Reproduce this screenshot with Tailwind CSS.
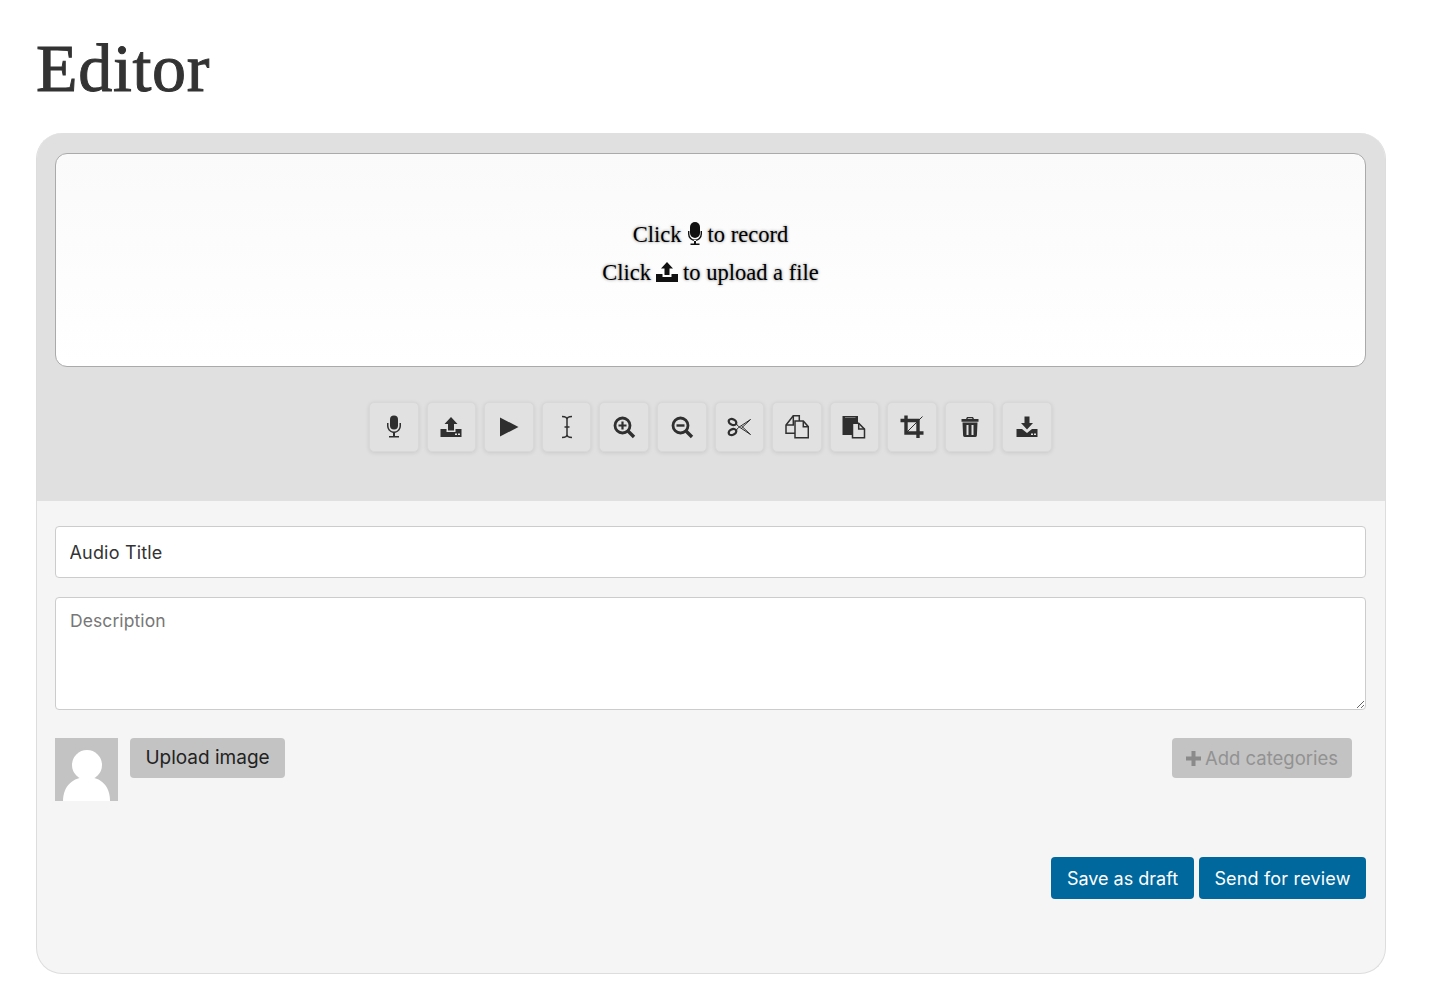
<!DOCTYPE html>
<html lang="en">
<head>
<meta charset="utf-8">
<title>Editor</title>
<script src="https://cdn.jsdelivr.net/npm/@tailwindcss/browser@4"></script>
</head>
<body class="bg-white font-['Inter','Liberation_Sans',sans-serif] text-[#333]">
<main class="w-[1350px] ml-9">
  <h1 class="h-[133px] pt-[26px] font-['Liberation_Serif',serif] text-[68px] leading-[84px] tracking-[0.7px] text-[#333] [-webkit-text-stroke:1px_#333]">Editor</h1>
  <section class="rounded-[26px] overflow-hidden bg-[#f5f5f5] border border-t-0 border-[#ddd] h-[841px]">
    <div class="bg-[#e0e0e0] -mx-px pl-[19px] pr-5 pt-5 h-[368px]">
      <div class="h-[214px] rounded-xl border border-[#aaa] bg-gradient-to-b from-[#fafafa] to-white flex flex-col items-center justify-center font-['Liberation_Serif',serif] text-[22.5px] leading-[38px] text-black [text-shadow:0_0_3px_rgba(0,0,0,0.5)] pb-3">
        <p class="flex items-center gap-[5px] h-[38px]">Click
          <svg class="w-[16px] h-[24px] -mt-[3px]" viewBox="0 0 16 24" fill="#111"><rect x="3" y="0" width="10" height="16" rx="5"/><path d="M1 9v3a7 7 0 0 0 14 0V9h-1.400v3a5.600 5.600 0 0 1-11.200 0V9zM7 18h2v3.500h3.500V23h-9v-1.500H7z"/></svg>
          to record</p>
        <p class="flex items-center gap-[5px] h-[38px]">Click
          <svg class="w-[22px] h-[20px] -mt-[3px]" viewBox="0 0 22 20" fill="#111"><path d="M11 0l6 6.500h-3.500V13h-5V6.500H5zM0 12h6.500v3h9v-3H22v8H0z"/></svg>
          to upload a file</p>
      </div>
      <div class="mt-[35px] flex justify-center gap-[8px]">
        <button class="w-[49.6px] h-[50px] rounded-[5px] bg-[#e1e1e1] border border-[#d8d8d8] shadow-[0_1px_4px_rgba(0,0,0,0.1)] flex items-center justify-center" aria-label="Record">
          <svg class="w-6 h-6" viewBox="0 0 24 24" fill="#2f2f2f"><rect x="8" y="0.500" width="8" height="14" rx="4"/><path d="M5 8h1.500v3a5.500 5.500 0 0 0 11 0V8H19v3a7 7 0 0 1-6 6.900V21h4v1.500H7V21h4v-3.100A7 7 0 0 1 5 11z"/></svg>
        </button>
        <button class="w-[49.6px] h-[50px] rounded-[5px] bg-[#e1e1e1] border border-[#d8d8d8] shadow-[0_1px_4px_rgba(0,0,0,0.1)] flex items-center justify-center" aria-label="Upload">
          <svg class="w-6 h-6" viewBox="0 0 24 24" fill="#2f2f2f"><path d="M12 2l6.500 7H15v6.500H9V9H5.500zM1.500 14H7.500v3h9v-3h6v8h-21z"/><rect x="16" y="18.500" width="2" height="1.500" fill="#e1e1e1"/><rect x="19" y="18.500" width="2" height="1.500" fill="#e1e1e1"/></svg>
        </button>
        <button class="w-[49.6px] h-[50px] rounded-[5px] bg-[#e1e1e1] border border-[#d8d8d8] shadow-[0_1px_4px_rgba(0,0,0,0.1)] flex items-center justify-center" aria-label="Play">
          <svg class="w-6 h-6" viewBox="0 0 24 24" fill="#2f2f2f"><path d="M3 2.500L21.500 12 3 21.500z"/></svg>
        </button>
        <button class="w-[49.6px] h-[50px] rounded-[5px] bg-[#e1e1e1] border border-[#d8d8d8] shadow-[0_1px_4px_rgba(0,0,0,0.1)] flex items-center justify-center" aria-label="Select">
          <svg class="w-6 h-6" viewBox="0 0 24 24" fill="none" stroke="#2f2f2f" stroke-width="1.500"><path d="M7 1.500c3 0 5 .5 5 3v15c0 2.500-2 3-5 3M17 1.500c-3 0-5 .5-5 3v15c0 2.500 2 3 5 3M9.500 12h5"/></svg>
        </button>
        <button class="w-[49.6px] h-[50px] rounded-[5px] bg-[#e1e1e1] border border-[#d8d8d8] shadow-[0_1px_4px_rgba(0,0,0,0.1)] flex items-center justify-center" aria-label="Zoom in">
          <svg class="w-6 h-6" viewBox="0 0 24 24" fill="none" stroke="#2f2f2f"><circle cx="10.500" cy="10.500" r="7.500" stroke-width="2.800"/><path d="M16 16l6 6" stroke-width="3.400"/><path d="M6.500 10.500h8M10.500 6.500v8" stroke-width="2.200"/></svg>
        </button>
        <button class="w-[49.6px] h-[50px] rounded-[5px] bg-[#e1e1e1] border border-[#d8d8d8] shadow-[0_1px_4px_rgba(0,0,0,0.1)] flex items-center justify-center" aria-label="Zoom out">
          <svg class="w-6 h-6" viewBox="0 0 24 24" fill="none" stroke="#2f2f2f"><circle cx="10.500" cy="10.500" r="7.500" stroke-width="2.800"/><path d="M16 16l6 6" stroke-width="3.400"/><path d="M6.500 10.500h8" stroke-width="2.400"/></svg>
        </button>
        <button class="w-[49.6px] h-[50px] rounded-[5px] bg-[#e1e1e1] border border-[#d8d8d8] shadow-[0_1px_4px_rgba(0,0,0,0.1)] flex items-center justify-center" aria-label="Cut">
          <svg class="w-6 h-6" viewBox="0 0 24 24" fill="none" stroke="#2f2f2f"><ellipse cx="5.500" cy="7" rx="4" ry="2.800" transform="rotate(25 5.500 7)" stroke-width="2.200"/><ellipse cx="5.500" cy="17" rx="4" ry="2.800" transform="rotate(-25 5.500 17)" stroke-width="2.200"/><path d="M9 8.500L11.500 11.500 23.500 19.500 14.500 11 M9 15.500L11.500 12.500 23.500 4.500 14.500 13" stroke-width="1"/></svg>
        </button>
        <button class="w-[49.6px] h-[50px] rounded-[5px] bg-[#e1e1e1] border border-[#d8d8d8] shadow-[0_1px_4px_rgba(0,0,0,0.1)] flex items-center justify-center" aria-label="Copy">
          <svg class="w-6 h-6" viewBox="0 0 24 24" fill="none" stroke="#2f2f2f" stroke-width="1.500"><path d="M10 18.300H1V10L8.300 .7h6v5.300"/><path d="M1 10H8.300V.7"/><path d="M10 6h8.300l5 5.700v11H10z" fill="#e1e1e1"/><path d="M18.300 6v5.700h5"/></svg>
        </button>
        <button class="w-[49.6px] h-[50px] rounded-[5px] bg-[#e1e1e1] border border-[#d8d8d8] shadow-[0_1px_4px_rgba(0,0,0,0.1)] flex items-center justify-center" aria-label="Paste">
          <svg class="w-6 h-6" viewBox="0 0 24 24"><path d="M.5 1h15.500v19H.5z" fill="#2f2f2f"/><path d="M3 2.500h10.500" stroke="#8a8a8a" stroke-width=".8"/><path d="M10.500 8.300h6.200l5.800 5.800v8.600H10.500z" fill="#e1e1e1" stroke="#2f2f2f" stroke-width="1.500"/><path d="M16.700 8.300v5.800h5.800" fill="none" stroke="#2f2f2f" stroke-width="1.500"/></svg>
        </button>
        <button class="w-[49.6px] h-[50px] rounded-[5px] bg-[#e1e1e1] border border-[#d8d8d8] shadow-[0_1px_4px_rgba(0,0,0,0.1)] flex items-center justify-center" aria-label="Crop">
          <svg class="w-6 h-6" viewBox="0 0 24 24" fill="none" stroke="#2f2f2f"><path d="M0.500 5.500H18V23M6 0.500V18H23.500" stroke-width="3.400"/><path d="M6 18L22.500 1.500" stroke-width="1"/></svg>
        </button>
        <button class="w-[49.6px] h-[50px] rounded-[5px] bg-[#e1e1e1] border border-[#d8d8d8] shadow-[0_1px_4px_rgba(0,0,0,0.1)] flex items-center justify-center" aria-label="Delete">
          <svg class="w-6 h-6" viewBox="0 0 24 24" fill="#2f2f2f"><path d="M9 2h6l1 2h4.500v2.800H3.500V4H8zM10 3.200l-.5 .8h5l-.5-.8z"/><path fill-rule="evenodd" d="M4.500 7.500h15l-.6 13a1.800 1.800 0 0 1-1.800 1.500H6.900a1.800 1.800 0 0 1-1.800-1.500zM8.500 10v10h2V10zM13.500 10v10h2V10z"/></svg>
        </button>
        <button class="w-[49.6px] h-[50px] rounded-[5px] bg-[#e1e1e1] border border-[#d8d8d8] shadow-[0_1px_4px_rgba(0,0,0,0.1)] flex items-center justify-center" aria-label="Download">
          <svg class="w-6 h-6" viewBox="0 0 24 24" fill="#2f2f2f"><path d="M9.500 1.500h5V8H18l-6 6.500L6 8h3.500zM1.500 14H7l5 4 5-4h5.500v8h-21z"/><rect x="16" y="18.500" width="2" height="1.500" fill="#e1e1e1"/><rect x="19" y="18.500" width="2" height="1.500" fill="#e1e1e1"/></svg>
        </button>
      </div>
    </div>
    <div class="pl-[18px] pr-[19px] pt-[25px]">
      <input class="block w-full h-[52px] rounded-[4px] border border-[#ccc] bg-white pl-[13.500px] pr-[14px] text-[18px] tracking-[0.01em] text-[#333] outline-none" value="Audio Title" aria-label="Audio Title">
      <textarea class="block w-full h-[113px] mt-[19px] rounded-[4px] border border-[#ccc] bg-white px-[14px] pt-[10px] text-[17.5px] tracking-[0.005em] text-[#333] placeholder:text-[#777] outline-none" placeholder="Description"></textarea>
      <div class="mt-7 h-[63px] flex items-start">
        <svg class="w-[63px] h-[63px] bg-[#c3c3c3] shrink-0" viewBox="0 0 63 63" fill="#fff"><circle cx="32" cy="27" r="15"/><path d="M8 63c0-15 10-24 24-24s23 9 23 24z"/></svg>
        <button class="ml-3 w-[155px] h-10 pt-px rounded-[4px] bg-[#c3c3c3] text-[19px] text-[#222]">Upload image</button>
        <button class="ml-auto mr-[14px] w-[180px] h-10 pt-px rounded-[4px] bg-[#c3c3c3] text-[18.5px] text-[#929292] flex items-center justify-center gap-[4px]">
          <svg class="w-[15px] h-[15px]" viewBox="0 0 15 15" fill="#8a8a8a"><path d="M5.500 0h4v5.500H15v4H9.500V15h-4V9.500H0v-4h5.500z"/></svg>
          Add categories</button>
      </div>
      <div class="mt-14 flex justify-end gap-[5px]">
        <button class="w-[143px] h-[42px] pt-px rounded-[4px] bg-[#00689d] text-white text-[18px]">Save as draft</button>
        <button class="w-[167px] h-[42px] pt-px rounded-[4px] bg-[#00689d] text-white text-[18px] tracking-[0.01em]">Send for review</button>
      </div>
    </div>
  </section>
</main>
</body>
</html>
